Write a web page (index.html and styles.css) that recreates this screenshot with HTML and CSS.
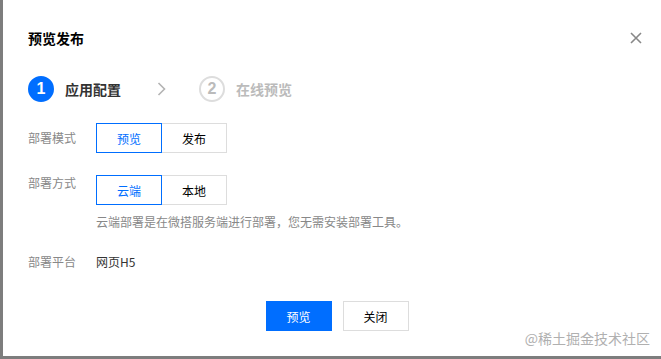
FILE: index.html
```html
<!DOCTYPE html>
<html lang="zh-CN">
<head>
    <meta charset="UTF-8">
    <title>预览发布</title>
    <link rel="stylesheet" href="styles.css">
</head>
<body>

    <div class="dialog">
        <div class="dialog-header">
            <h2 class="dialog-title">预览发布</h2>
            <span class="dialog-close">
                <svg width="12" height="12" viewBox="0 0 12 12">
                    <path d="M1 1 L11 11 M11 1 L1 11" stroke="#888" stroke-width="1.6" fill="none"/>
                </svg>
            </span>
        </div>

        <div class="steps">
            <div class="step active">
                <span class="step-num">1</span>
                <span class="step-text">应用配置</span>
            </div>
            <span class="step-arrow">
                <svg width="9" height="14" viewBox="0 0 9 14">
                    <path d="M1.5 1 L7.5 7 L1.5 13" stroke="#b3b3b3" stroke-width="1.6" fill="none"/>
                </svg>
            </span>
            <div class="step">
                <span class="step-num">2</span>
                <span class="step-text">在线预览</span>
            </div>
        </div>

        <div class="form">
            <div class="form-row">
                <label class="form-label">部署模式</label>
                <div class="form-ctrl">
                    <div class="seg">
                        <button class="seg-btn selected">预览</button>
                        <button class="seg-btn">发布</button>
                    </div>
                </div>
            </div>

            <div class="form-row row-top">
                <label class="form-label">部署方式</label>
                <div class="form-ctrl">
                    <div class="seg">
                        <button class="seg-btn selected">云端</button>
                        <button class="seg-btn">本地</button>
                    </div>
                    <p class="form-help">云端部署是在微搭服务端进行部署，您无需安装部署工具。</p>
                </div>
            </div>

            <div class="form-row">
                <label class="form-label">部署平台</label>
                <div class="form-ctrl">
                    <span class="form-text">网页H5</span>
                </div>
            </div>
        </div>

        <div class="dialog-footer">
            <button class="btn btn-primary">预览</button>
            <button class="btn">关闭</button>
        </div>

        <div class="watermark">@稀土掘金技术社区</div>
    </div>

</body>
</html>
```

FILE: styles.css
```css
body {
    margin: 0;
    padding: 0;
    background: #7d7d7d;
    font-family: "Noto Sans CJK SC", "Noto Sans", sans-serif;
    color: #333;
    font-size: 12px;
    height: 359px;
    overflow: hidden;
}

.dialog {
    position: relative;
    margin-left: 3px;
    width: 658px;
    height: 356px;
    background: #fff;
    box-sizing: border-box;
    padding: 28px 18px 0 25px;
}

.dialog-header {
    display: flex;
    align-items: center;
    justify-content: space-between;
    height: 20px;
}

.dialog-title {
    margin: 0;
    font-size: 14px;
    line-height: 20px;
    font-weight: bold;
    color: #000;
}

.dialog-close {
    display: flex;
    width: 14px;
    height: 14px;
    align-items: center;
    justify-content: center;
}

.steps {
    display: flex;
    align-items: center;
    margin-top: 28px;
    height: 26px;
}

.step {
    display: flex;
    align-items: center;
}

.step-num {
    width: 26px;
    height: 26px;
    box-sizing: border-box;
    border-radius: 50%;
    border: 2px solid #ddd;
    color: #bbb;
    font-family: "Liberation Sans", Arial, sans-serif;
    font-weight: bold;
    font-size: 16px;
    line-height: 22px;
    text-align: center;
}

.step-text {
    margin-left: 11px;
    font-size: 14px;
    font-weight: bold;
    color: #bbb;
}

.step.active .step-num {
    background: #006eff;
    border-color: #006eff;
    color: #fff;
}

.step.active .step-text {
    color: #333;
}

.step-arrow {
    display: flex;
    margin: 0 33px 0 36px;
}

.form {
    margin-top: 21px;
}

.form-row {
    display: flex;
    align-items: center;
    margin-bottom: 22px;
}

.form-row.row-top {
    align-items: flex-start;
}

.form-label {
    width: 68px;
    flex-shrink: 0;
    color: #888;
    line-height: 18px;
}

.row-top .form-label {
    line-height: 16px;
}

.seg {
    display: flex;
}

.seg-btn {
    width: 66px;
    height: 30px;
    margin: 0 0 0 -1px;
    padding: 0;
    border: 1px solid #ddd;
    background: #fff;
    color: #000;
    font-family: inherit;
    font-size: 12px;
    position: relative;
}

.seg-btn:first-child {
    margin-left: 0;
}

.seg-btn.selected {
    border-color: #006eff;
    color: #006eff;
    z-index: 1;
}

.form-help {
    margin: 8px 0 0;
    color: #888;
    line-height: 18px;
}

.form-text {
    line-height: 18px;
    color: #333;
}

.form-row:last-child {
    margin-bottom: 0;
}

.dialog-footer {
    display: flex;
    justify-content: center;
    gap: 11px;
    margin-top: 30px;
    padding-left: 3px;
}

.btn {
    width: 66px;
    height: 30px;
    border: 1px solid #ddd;
    background: #fff;
    color: #000;
    font-family: inherit;
    font-size: 12px;
    padding: 0;
}

.btn-primary {
    background: #006eff;
    border-color: #006eff;
    color: #fff;
}

.watermark {
    position: absolute;
    right: 11px;
    bottom: 8px;
    font-size: 14px;
    color: #b0b0b0;
}
```
